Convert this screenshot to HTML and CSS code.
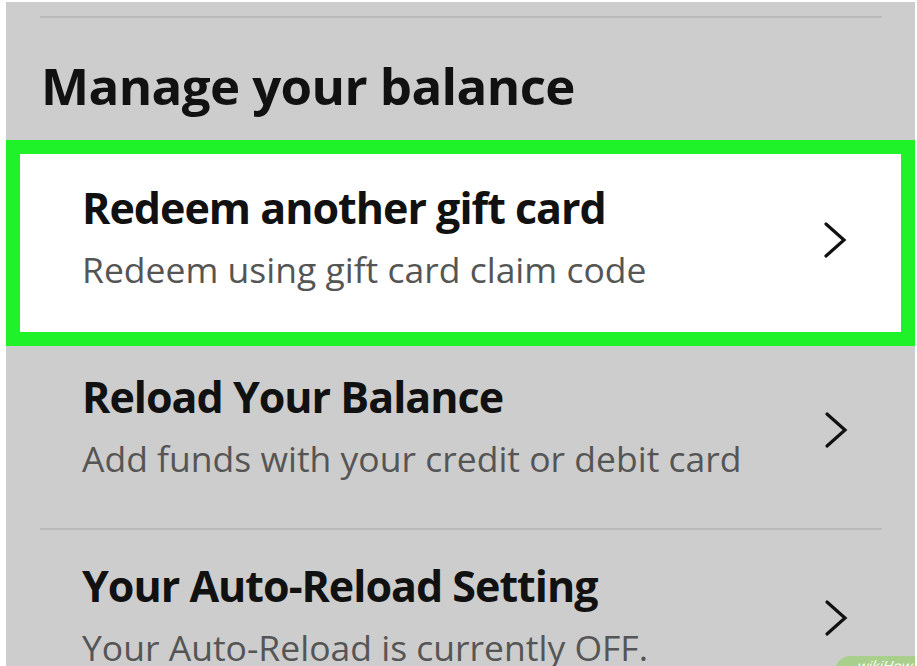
FILE: index.html
```html
<!DOCTYPE html>
<html>
<head>
<meta charset="utf-8">
<link rel="stylesheet" href="styles.css">
</head>
<body>
<div class="screen">
  <div class="rule"></div>
  <h1 class="heading">Manage your balance</h1>
  <div class="item item-highlight">
    <div class="texts">
      <div class="title">Redeem another gift card</div>
      <div class="sub">Redeem using gift card claim code</div>
    </div>
    <svg class="chev" width="24" height="38" viewBox="0 0 24 38"><path d="M3 3 L21 19 L3 35" fill="none" stroke="#111" stroke-width="3.2" stroke-linecap="round"/></svg>
  </div>
  <div class="item item-plain">
    <div class="texts">
      <div class="title">Reload Your Balance</div>
      <div class="sub">Add funds with your credit or debit card</div>
    </div>
    <svg class="chev" width="24" height="38" viewBox="0 0 24 38"><path d="M3 3 L21 19 L3 35" fill="none" stroke="#111" stroke-width="3.2" stroke-linecap="round"/></svg>
  </div>
  <div class="rule rule-mid"></div>
  <div class="item item-last">
    <div class="texts">
      <div class="title">Your Auto-Reload Setting</div>
      <div class="sub">Your Auto-Reload is currently OFF.</div>
    </div>
    <svg class="chev" width="24" height="38" viewBox="0 0 24 38"><path d="M3 3 L21 19 L3 35" fill="none" stroke="#111" stroke-width="3.2" stroke-linecap="round"/></svg>
  </div>
  <div class="badge">wikiHow</div>
</div>
</body>
</html>
```
FILE: styles.css
```css
html, body {
  margin: 0;
  padding: 0;
  background: #ffffff;
}
body {
  width: 917px;
  height: 666px;
  overflow: hidden;
  font-family: "Open Sans", sans-serif;
}
.screen {
  position: relative;
  margin: 2px 0 0 6px;
  width: 909px;
  height: 664px;
  background: #cdcdcd;
  overflow: hidden;
}
.rule {
  margin: 14px 33px 0 34px;
  height: 2px;
  background: #b9b9b9;
}
.heading {
  margin: 0;
  box-sizing: border-box;
  padding: 37px 0 0 35px;
  height: 122px;
  font-size: 51px;
  font-weight: 700;
  line-height: 60px;
  letter-spacing: -0.6px;
  color: #111;
}
.item {
  display: flex;
  align-items: flex-start;
  justify-content: space-between;
  box-sizing: border-box;
}
.item-highlight {
  height: 206px;
  border: 14px solid #20f22a;
  background: #ffffff;
  padding: 0 54px 0 62px;
}
.item-highlight .texts { padding-top: 28px; }
.item-highlight .chev { margin-top: 67px; }
.item-plain {
  height: 182px;
  padding: 0 67px 0 76px;
}
.item-plain .texts { padding-top: 25px; }
.item-plain .chev { margin-top: 65px; }
.rule-mid {
  margin-top: 0;
}
.item-last {
  height: 134px;
  padding: 0 67px 0 76px;
}
.item-last .texts { padding-top: 30px; }
.item-last .chev { margin-top: 69px; }
.texts {
  display: flex;
  flex-direction: column;
  gap: 12px;
}
.title {
  font-size: 43px;
  font-weight: 700;
  color: #111;
  line-height: 52px;
  letter-spacing: -1px;
}
.sub {
  font-size: 35.5px;
  color: #555;
  line-height: 46px;
  letter-spacing: 0;
}
.badge {
  position: absolute;
  right: -4px;
  bottom: -14px;
  width: 84px;
  height: 24px;
  background: #a9cf8c;
  color: #fff;
  font-size: 14px;
  border-radius: 10px 0 0 0;
  transform: skewX(-20deg);
  padding-left: 22px;
  box-sizing: border-box;
}
```
